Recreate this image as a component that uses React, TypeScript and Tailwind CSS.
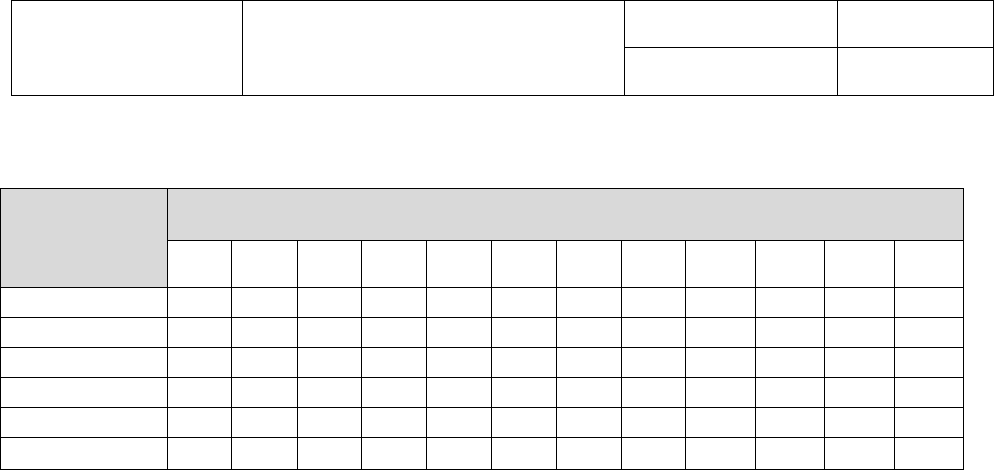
import React from "react";

const monthCols = Array.from({ length: 12 });
const bodyRows = Array.from({ length: 6 });

function InfoTable() {
  return (
    <div className="ml-[11px] grid w-[983px] grid-cols-[231px_382px_213px_156px] grid-rows-[47px_48px] border-l border-t border-black">
      <div className="row-span-2 border-b border-r border-black" />
      <div className="row-span-2 border-b border-r border-black" />
      <div className="border-b border-r border-black" />
      <div className="border-b border-r border-black" />
      <div className="border-b border-r border-black" />
      <div className="border-b border-r border-black" />
    </div>
  );
}

function ScheduleTable() {
  return (
    <div className="mt-[92px] grid w-[964px] grid-cols-[167px_64px_66px_64px_65px_65px_65px_65px_64px_70px_69px_70px_69px] grid-rows-[52px_47px_30px_30px_30px_30px_30px_32px] border-l border-t border-black">
      <div className="row-span-2 border-b border-r border-black bg-[#d9d9d9]" />
      <div className="col-span-12 border-b border-r border-black bg-[#d9d9d9]" />
      {monthCols.map((_, i) => (
        <div key={"h" + i} className="border-b border-r border-black bg-white" />
      ))}
      {bodyRows.map((_, r) => (
        <React.Fragment key={r}>
          <div className="border-b border-r border-black" />
          {monthCols.map((_, c) => (
            <div key={c} className="border-b border-r border-black" />
          ))}
        </React.Fragment>
      ))}
    </div>
  );
}

export default function App() {
  return (
    <div className="h-[472px] w-[994px] overflow-hidden bg-white font-['Liberation_Sans',Arial,sans-serif]">
      <InfoTable />
      <ScheduleTable />
    </div>
  );
}
